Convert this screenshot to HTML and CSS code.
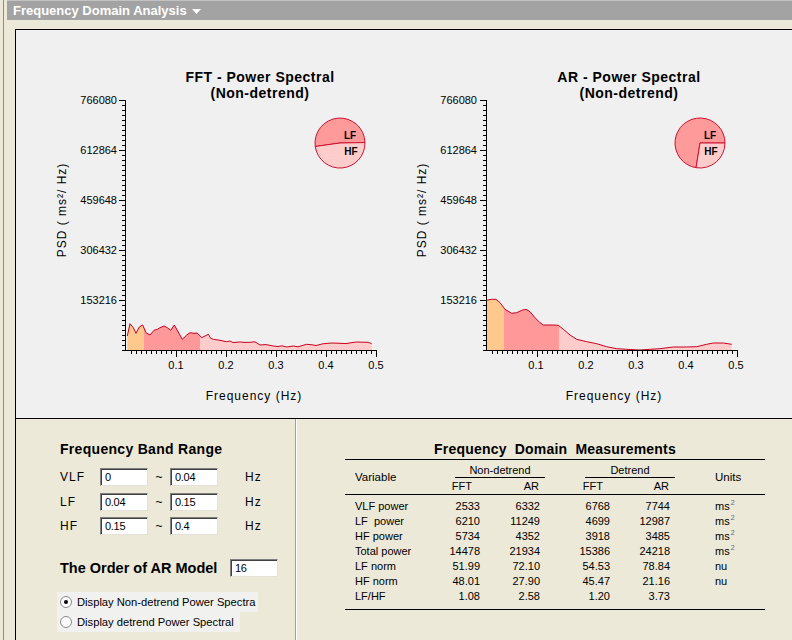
FILE: index.html
```html
<!DOCTYPE html>
<html>
<head>
<meta charset="utf-8">
<title>Frequency Domain Analysis</title>
<link rel="stylesheet" href="styles.css">
</head>
<body>
<div class="window">
  <div class="titlebar">
    <span class="title">Frequency Domain Analysis</span>
    <svg class="caret" width="9" height="5" viewBox="0 0 9 5"><path d="M0 0H9L4.5 5Z" fill="#fff"/></svg>
  </div>
  <div class="content">
    <div class="charts">
      <svg class="chart" width="384" height="388" viewBox="0 0 384 388">
        <defs>
          <clipPath id="l-vlf"><rect x="109" y="0" width="19" height="320"/></clipPath>
          <clipPath id="l-lf"><rect x="128" y="0" width="56" height="320"/></clipPath>
          <clipPath id="l-hf"><rect x="184" y="0" width="200" height="320"/></clipPath>
          <polygon id="l-area" points="111.3,320 111.3,306 114,293.7 117.3,297.7 120,303.3 123.3,297 126.7,295 130,302.7 134,305 138,300.3 141.3,299.3 144,297.7 148,296 151.3,297.7 154.7,300.3 158.3,295 161.7,301 166.3,309.3 170.7,305 174,302.7 178,303.3 181.3,303 185.7,307.7 189,306 192.3,304.3 194.7,308.3 197.3,309.3 204,310.3 210.7,311.7 214,311 217,312.5 224,312 229,312.4 234,312.3 239,311.8 244,315 250,314.6 257.3,316 262,316.5 266,315.8 270.7,317 277.3,316 282,316.8 286,315.6 290.7,314.3 296,314.8 300,315.5 307.3,313.7 316,313 324,313.3 330,313.6 336,312.6 340.7,312 346,312.2 352.3,312.3 355.7,313.7 355.7,320"/>
        </defs>
        <text class="ttl" x="244" y="52">FFT - Power Spectral</text>
        <text class="ttl" x="244" y="68">(Non-detrend)</text>

        <path class="pie pie-lf" d="M324,113 L349,112.56 A25,25 0 1,0 299.24,116.48 Z"/>
        <path class="pie pie-hf" d="M324,113 L349,112.56 A25,25 0 0,1 299.24,116.48 Z"/>
        <text class="pie-t" x="334" y="109">LF</text>
        <text class="pie-t" x="335" y="125">HF</text>

        <use href="#l-area" clip-path="url(#l-vlf)" class="fill-vlf"/>
        <use href="#l-area" clip-path="url(#l-lf)" class="fill-lf"/>
        <use href="#l-area" clip-path="url(#l-hf)" class="fill-hf"/>
        <polyline class="curve" points="111.3,306 114,293.7 117.3,297.7 120,303.3 123.3,297 126.7,295 130,302.7 134,305 138,300.3 141.3,299.3 144,297.7 148,296 151.3,297.7 154.7,300.3 158.3,295 161.7,301 166.3,309.3 170.7,305 174,302.7 178,303.3 181.3,303 185.7,307.7 189,306 192.3,304.3 194.7,308.3 197.3,309.3 204,310.3 210.7,311.7 214,311 217,312.5 224,312 229,312.4 234,312.3 239,311.8 244,315 250,314.6 257.3,316 262,316.5 266,315.8 270.7,317 277.3,316 282,316.8 286,315.6 290.7,314.3 296,314.8 300,315.5 307.3,313.7 316,313 324,313.3 330,313.6 336,312.6 340.7,312 346,312.2 352.3,312.3 355.7,313.7"/>

        <path class="axis" d="M109.5,70 V321 M109,320.5 H361 M103,70.5 H110 M103,120.5 H110 M103,170.5 H110 M103,220.5 H110 M103,270.5 H110 M160.5,321 V327 M210.5,321 V327 M260.5,321 V327 M310.5,321 V327 M360.5,321 V327"/>
        <line class="minor" x1="107.5" y1="70" x2="107.5" y2="321"/>
        <line class="minor" x1="115" y1="322.5" x2="361" y2="322.5"/>

        <text class="ylab" x="101" y="74">766080</text>
        <text class="ylab" x="101" y="124">612864</text>
        <text class="ylab" x="101" y="174">459648</text>
        <text class="ylab" x="101" y="224">306432</text>
        <text class="ylab" x="101" y="274">153216</text>

        <text class="xlab" x="160" y="339">0.1</text>
        <text class="xlab" x="210" y="339">0.2</text>
        <text class="xlab" x="260" y="339">0.3</text>
        <text class="xlab" x="310" y="339">0.4</text>
        <text class="xlab" x="360" y="339">0.5</text>

        <text class="axt" x="238" y="370">Frequency (Hz)</text>
        <text class="axt" x="46" y="184" transform="rotate(-90 46 180)">PSD ( ms²/ Hz)</text>
      </svg>

      <svg class="chart" width="392" height="388" viewBox="0 0 392 388">
        <defs>
          <clipPath id="r-vlf"><rect x="86" y="0" width="18" height="320"/></clipPath>
          <clipPath id="r-lf"><rect x="104" y="0" width="55" height="320"/></clipPath>
          <clipPath id="r-hf"><rect x="159" y="0" width="233" height="320"/></clipPath>
          <polygon id="r-area" points="86,320 86,270.3 91.7,269.3 96,269.3 100,272.7 105,279.3 111.7,283.3 116.7,282.7 121.7,280.3 126,279.3 130,281.7 135,287.7 140,292.7 143.3,295 153.3,295 158.3,295.3 163.3,299.3 170,305 176.7,309.3 186.7,311.7 196.7,313.7 206.7,316.7 216.7,318.7 226.7,319.3 240,320 250,319.3 260,318.7 273.3,317 286.7,317 296.7,316.7 306.7,314.3 313.3,313 323.3,313 331.7,314.3 331.7,320"/>
        </defs>
        <text class="ttl" x="229" y="52">AR - Power Spectral</text>
        <text class="ttl" x="229" y="68">(Non-detrend)</text>

        <path class="pie pie-lf" d="M300,113 L325,113 A25,25 0 1,0 296.05,137.69 Z"/>
        <path class="pie pie-hf" d="M300,113 L325,113 A25,25 0 0,1 296.05,137.69 Z"/>
        <text class="pie-t" x="310" y="109">LF</text>
        <text class="pie-t" x="311" y="125">HF</text>

        <use href="#r-area" clip-path="url(#r-vlf)" class="fill-vlf"/>
        <use href="#r-area" clip-path="url(#r-lf)" class="fill-lf"/>
        <use href="#r-area" clip-path="url(#r-hf)" class="fill-hf"/>
        <polyline class="curve" points="86,270.3 91.7,269.3 96,269.3 100,272.7 105,279.3 111.7,283.3 116.7,282.7 121.7,280.3 126,279.3 130,281.7 135,287.7 140,292.7 143.3,295 153.3,295 158.3,295.3 163.3,299.3 170,305 176.7,309.3 186.7,311.7 196.7,313.7 206.7,316.7 216.7,318.7 226.7,319.3 240,320 250,319.3 260,318.7 273.3,317 286.7,317 296.7,316.7 306.7,314.3 313.3,313 323.3,313 331.7,314.3"/>

        <path class="axis" d="M86.5,70 V321 M86,320.5 H338 M80,70.5 H87 M80,120.5 H87 M80,170.5 H87 M80,220.5 H87 M80,270.5 H87 M137.5,321 V327 M187.5,321 V327 M237.5,321 V327 M287.5,321 V327 M337.5,321 V327"/>
        <line class="minor" x1="84.5" y1="70" x2="84.5" y2="321"/>
        <line class="minor" x1="92" y1="322.5" x2="338" y2="322.5"/>

        <text class="ylab" x="77" y="74">766080</text>
        <text class="ylab" x="77" y="124">612864</text>
        <text class="ylab" x="77" y="174">459648</text>
        <text class="ylab" x="77" y="224">306432</text>
        <text class="ylab" x="77" y="274">153216</text>

        <text class="xlab" x="136" y="339">0.1</text>
        <text class="xlab" x="186" y="339">0.2</text>
        <text class="xlab" x="236" y="339">0.3</text>
        <text class="xlab" x="286" y="339">0.4</text>
        <text class="xlab" x="336" y="339">0.5</text>

        <text class="axt" x="214" y="370">Frequency (Hz)</text>
        <text class="axt" x="22" y="184" transform="rotate(-90 22 180)">PSD ( ms²/ Hz)</text>
      </svg>
    </div>

    <div class="bottom">
      <div class="band">
        <h2 class="band-title">Frequency Band Range</h2>
        <div class="band-grid">
          <span class="lbl">VLF</span><span class="field">0</span><span class="tilde">~</span><span class="field">0.04</span><span class="unit">Hz</span>
          <span class="lbl">LF</span><span class="field">0.04</span><span class="tilde">~</span><span class="field">0.15</span><span class="unit">Hz</span>
          <span class="lbl">HF</span><span class="field">0.15</span><span class="tilde">~</span><span class="field">0.4</span><span class="unit">Hz</span>
        </div>
        <div class="order">
          <span class="order-title">The Order of AR Model</span><span class="field">16</span>
        </div>
        <div class="radios">
          <div class="radio radio-1 checked"><span class="dot"></span><span class="radio-text">Display Non-detrend Power Spectra</span></div>
          <div class="radio radio-2"><span class="dot"></span><span class="radio-text">Display detrend Power Spectral</span></div>
        </div>
      </div>

      <div class="measure">
        <div class="m-title">Frequency Domain Measurements</div>
        <div class="m-head">
          <div class="h-var">Variable</div>
          <div class="h-grp g1"><span>Non-detrend</span></div>
          <div class="h-grp g2"><span>Detrend</span></div>
          <div class="h-units">Units</div>
          <div class="h-sub s1">FFT</div>
          <div class="h-sub s2">AR</div>
          <div class="h-sub s3">FFT</div>
          <div class="h-sub s4">AR</div>
        </div>
        <div class="m-body">
          <span class="v">VLF power</span><span class="n">2533</span><span class="n">6332</span><span class="n">6768</span><span class="n">7744</span><span class="u">ms<sup>2</sup></span>
          <span class="v">LF&nbsp; power</span><span class="n">6210</span><span class="n">11249</span><span class="n">4699</span><span class="n">12987</span><span class="u">ms<sup>2</sup></span>
          <span class="v">HF power</span><span class="n">5734</span><span class="n">4352</span><span class="n">3918</span><span class="n">3485</span><span class="u">ms<sup>2</sup></span>
          <span class="v">Total power</span><span class="n">14478</span><span class="n">21934</span><span class="n">15386</span><span class="n">24218</span><span class="u">ms<sup>2</sup></span>
          <span class="v">LF norm</span><span class="n">51.99</span><span class="n">72.10</span><span class="n">54.53</span><span class="n">78.84</span><span class="u">nu</span>
          <span class="v">HF norm</span><span class="n">48.01</span><span class="n">27.90</span><span class="n">45.47</span><span class="n">21.16</span><span class="u">nu</span>
          <span class="v">LF/HF</span><span class="n">1.08</span><span class="n">2.58</span><span class="n">1.20</span><span class="n">3.73</span><span class="u"></span>
        </div>
      </div>
    </div>
  </div>
</div>
</body>
</html>
```

FILE: styles.css
```css
* { box-sizing: border-box; }
html, body { margin: 0; padding: 0; }
body {
  width: 792px;
  height: 640px;
  overflow: hidden;
  background: #ece9d8;
  font-family: "Liberation Sans", Arial, sans-serif;
  color: #000;
}
.window {
  margin-left: 3px;
  border-left: 1px solid #8c8c8c;
  height: 640px;
  display: flex;
  flex-direction: column;
}
.titlebar {
  margin-left: 3px;
  height: 20px;
  flex: none;
  background: #a3a3a3;
  border-top: 1px solid #c2c2c2;
  display: flex;
  align-items: center;
  gap: 5px;
  padding-left: 6px;
  color: #fff;
  font-weight: bold;
  font-size: 13px;
}
.caret { margin-top: 1px; }
.content {
  margin-top: 9px;
  margin-left: 11px;
  border-top: 1px solid #000;
  border-left: 1px solid #000;
  flex: 1;
  display: flex;
  flex-direction: column;
  min-height: 0;
}
.charts {
  height: 388px;
  flex: none;
  background: #f0f0f0;
  display: flex;
}
.chart { display: block; flex: none; }
.chart text { font-family: "Liberation Sans", Arial, sans-serif; fill: #000; }
.ttl { font-size: 14px; font-weight: bold; text-anchor: middle; letter-spacing: 0.5px; }
.ylab { font-size: 11px; text-anchor: end; }
.xlab { font-size: 11px; text-anchor: middle; }
.axt { font-size: 12px; letter-spacing: 1px; text-anchor: middle; }
.pie-t { font-size: 10px; font-weight: bold; text-anchor: middle; fill: #222; }
.pie { stroke: #cc1030; stroke-width: 1; }
.pie-lf { fill: #ff9a9a; }
.pie-hf { fill: #ffcccc; }
.fill-vlf { fill: #ffc98e; }
.fill-lf { fill: #ff9999; }
.fill-hf { fill: #ffcccc; }
.curve { fill: none; stroke: #c8001e; stroke-width: 1; }
.axis { stroke: #000; stroke-width: 1; fill: none; shape-rendering: crispEdges; }
.minor { stroke: #000; stroke-width: 3; stroke-dasharray: 1 4; shape-rendering: crispEdges; }

.bottom {
  flex: 1;
  border-top: 1px solid #000;
  display: flex;
}
.band {
  width: 280px;
  flex: none;
  border-right: 1px solid #a0a0a0;
  box-shadow: 1px 0 0 #fff;
  padding: 22px 0 0 44px;
}
.band-title {
  margin: 0;
  font-size: 14px;
  font-weight: bold;
  line-height: 17px;
  letter-spacing: 0.3px;
}
.band-grid {
  margin-top: 10px;
  display: grid;
  grid-template-columns: 40px 48px 22px 48px auto;
  grid-auto-rows: 18px;
  row-gap: 6.5px;
  align-items: center;
}
.lbl, .unit { font-size: 12px; letter-spacing: 1px; }
.unit { padding-left: 27px; }
.tilde { text-align: center; font-size: 12px; }
.field {
  display: block;
  height: 18px;
  background: #fff;
  border: 1px solid;
  border-color: #7f7f7f #e4e2d8 #e4e2d8 #7f7f7f;
  box-shadow: inset 1px 1px 0 #404040;
  font-size: 11px;
  line-height: 16px;
  padding-left: 4px;
  letter-spacing: -0.3px;
}
.order {
  margin-top: 24px;
  display: grid;
  grid-template-columns: 170px 48px;
  align-items: center;
}
.order-title { font-size: 14.5px; font-weight: bold; }
.radios {
  margin-top: 15px;
  margin-left: -3px;
  display: flex;
  flex-direction: column;
}
.radio {
  display: flex;
  align-items: center;
  gap: 5px;
  height: 20px;
  padding-left: 3px;
  background: #f1f1ef;
  font-size: 11.5px;
  white-space: nowrap;
}
.radio-1 { width: 201px; }
.radio-2 { width: 183px; }
.radio-text { font-size: 11.2px; }
.dot {
  flex: none;
  width: 12px;
  height: 12px;
  border-radius: 50%;
  background: #fff;
  border: 1px solid #8a8a8a;
  display: flex;
  align-items: center;
  justify-content: center;
}
.checked .dot::after {
  content: "";
  width: 4px;
  height: 4px;
  border-radius: 50%;
  background: #000;
}

.measure {
  flex: 1;
  padding: 22px 0 0 49px;
}
.m-title {
  width: 420px;
  font-size: 14px;
  font-weight: bold;
  text-align: center;
  letter-spacing: 0.2px;
  word-spacing: 4px;
  line-height: 17px;
  padding-bottom: 1px;
  border-bottom: 1px solid #000;
}
.m-head, .m-body {
  width: 420px;
  display: grid;
  grid-template-columns: 75px 60px 60px 70px 60px 95px;
  font-size: 11px;
}
.m-head {
  grid-template-rows: 18px 16px;
  border-bottom: 1px solid #000;
}
.h-var { grid-row: 1 / 3; grid-column: 1; align-self: center; padding-left: 10px; font-size: 11.5px; }
.h-units { grid-row: 1 / 3; grid-column: 6; align-self: center; padding-left: 45px; font-size: 11.5px; }
.h-grp { grid-row: 1; padding-top: 4px; }
.h-grp span {
  display: block;
  width: 90px;
  text-align: center;
  line-height: 13px;
  border-bottom: 1px solid #000;
}
.g1 { grid-column: 2 / 4; }
.g1 span { margin-left: 35px; }
.g2 { grid-column: 4 / 6; }
.g2 span { margin-left: 45px; }
.h-sub { grid-row: 2; text-align: right; line-height: 16px; }
.s1 { grid-column: 2; padding-right: 8px; }
.s2 { grid-column: 3; padding-right: 1px; }
.s3 { grid-column: 4; padding-right: 7px; }
.s4 { grid-column: 5; padding-right: 1px; }
.m-body {
  grid-auto-rows: 15px;
  line-height: 15px;
  padding: 4px 0 5px;
  border-bottom: 1px solid #000;
}
.m-body .v { padding-left: 10px; white-space: nowrap; }
.m-body .n { text-align: right; }
.m-body .u { padding-left: 45px; }
.m-body sup {
  font-size: 7px;
  line-height: 1;
  vertical-align: 5px;
  margin-left: 1px;
  color: #666;
}
```
